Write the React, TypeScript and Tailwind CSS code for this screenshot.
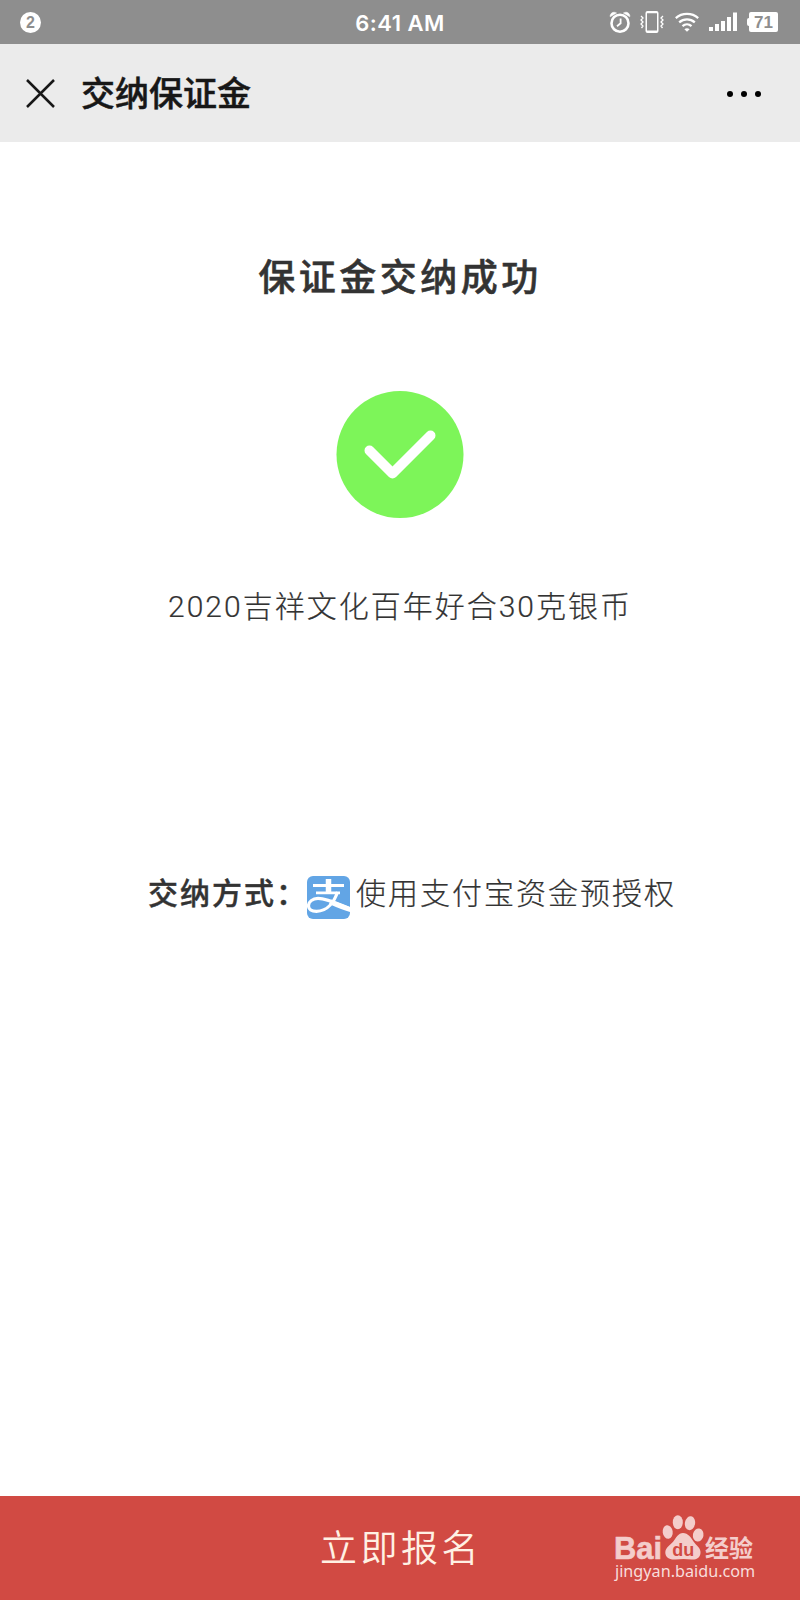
function AlarmIcon() {
  return (
    <svg width="22" height="24" viewBox="0 0 22 24" fill="none" stroke="white">
      <circle cx="11" cy="13.200" r="8.500" strokeWidth="2.600" />
      <path d="M11.600 8.500v4.800l-3.600 3" strokeWidth="1.800" />
      <path d="M1.200 6.800C.6 3.200 4.600 1 7.600 3ZM20.800 6.800C21.400 3.200 17.400 1 14.400 3Z" fill="white" strokeWidth="0.500" />
    </svg>
  );
}

function VibrateIcon() {
  return (
    <svg width="24" height="24" viewBox="0 0 24 24" fill="none" stroke="white">
      <path
        fill="white"
        fillRule="evenodd"
        stroke="none"
        d="M7.500 1h9a2 2 0 0 1 2 2v18a2 2 0 0 1-2 2h-9a2 2 0 0 1-2-2V3a2 2 0 0 1 2-2ZM7 3.200v17.400h10V3.200Z"
      />
      <path
        d="M1 6l2 2-2 2 2 2-2 2 2 2-1.500 2M23 6l-2 2 2 2-2 2 2 2-2 2 1.500 2"
        strokeWidth="1.300"
      />
    </svg>
  );
}

function WifiIcon() {
  return (
    <svg width="24" height="20" viewBox="0 0 24 20" fill="none" stroke="white" strokeWidth="2.300">
      <path d="M.8 6.100C7 .5 17 .5 23.200 6.100" />
      <path d="M4.200 10.300c4.500-4 11.100-4 15.600 0" />
      <path d="M7.500 14.200c2.600-2.400 6.400-2.400 9 0" />
      <path d="M9.400 17.200c1.500-1.400 3.700-1.400 5.200 0L12 19.800Z" fill="white" stroke="none" />
    </svg>
  );
}

function SignalIcon() {
  return (
    <svg width="28" height="20" viewBox="0 0 28 20" fill="white">
      <rect x="0" y="15" width="4" height="4" />
      <rect x="6" y="12" width="4" height="7" />
      <rect x="12" y="9" width="4" height="10" />
      <rect x="18" y="5" width="4" height="14" />
      <rect x="24" y="0.500" width="4" height="18.500" />
    </svg>
  );
}

function StatusBar() {
  return (
    <div className="flex h-11 shrink-0 items-center bg-[#8e8e8e] text-white">
      <div className="flex flex-1 pl-5">
        <span className="flex size-[21px] items-center justify-center rounded-full bg-white pt-px font-['Liberation_Sans',sans-serif] text-base leading-none font-bold text-[#8e8e8e]">
          2
        </span>
      </div>
      <span className="pt-0.5 pl-0.5 font-['Inter',sans-serif] text-[22px] leading-none font-semibold tracking-[0.500px]">
        6:41 AM
      </span>
      <div className="flex flex-1 items-center justify-end pr-[22px]">
        <AlarmIcon />
        <span className="ml-[9px]">
          <VibrateIcon />
        </span>
        <span className="ml-[11px]">
          <WifiIcon />
        </span>
        <span className="ml-[10px]">
          <SignalIcon />
        </span>
        <span className="ml-[10px] h-2 w-0.5 rounded-l-xs bg-white" />
        <span className="flex h-5 w-[29px] items-center justify-center rounded-xs bg-white font-['Liberation_Sans',sans-serif] text-[17px] leading-none font-bold text-[#8e8e8e]">
          71
        </span>
      </div>
    </div>
  );
}

function AlipayLogo() {
  return (
    <svg width="43" height="43" viewBox="0 0 43 43" className="overflow-hidden rounded-md">
      <rect width="43" height="43" fill="#62a5e5" />
      <g fill="none" stroke="white">
        <path d="M21.500 3v13" strokeWidth="5.500" />
        <path d="M6 9.500h31" strokeWidth="3" />
        <path d="M9 16.800h24" strokeWidth="2.700" />
        <path
          d="M30.500 16C27.500 25 21 35.300 9.500 35.300c-5 0-8-2-8-5.500C1.500 26 5.500 22.300 11 22.300c9 0 20 5.500 32 10.500"
          strokeWidth="3.200"
        />
        <path d="M23 25.800c6 2.700 13 5.700 21 8" strokeWidth="4.800" />
      </g>
    </svg>
  );
}

function BaiduMark() {
  return (
    <div className="h-[70px] w-[142px] text-[#f8dedc]">
      <svg width="142" height="46" viewBox="0 0 142 46" fill="#f4cdcb" className="overflow-visible">
        <text
          x="0"
          y="43.500"
          textLength="48"
          lengthAdjust="spacingAndGlyphs"
          stroke="#f4cdcb"
          strokeWidth="0.600"
          className="font-['Liberation_Sans',sans-serif] text-[32px] font-bold"
        >
          Bai
        </text>
        <ellipse cx="53.700" cy="17" rx="5" ry="6.900" transform="rotate(-8 53.700 17)" />
        <ellipse cx="63.800" cy="7.200" rx="5" ry="7" />
        <ellipse cx="76" cy="8.200" rx="5.100" ry="7" transform="rotate(10 76 8.200)" />
        <ellipse cx="84.200" cy="20" rx="5.300" ry="6.600" transform="rotate(10 84.200 20)" />
        <path d="M69 18c5 0 8 4.500 10.500 8.500 3 4.500 7.500 6.500 7 11.500-.5 5.500-5 7-9 6.500-5-.8-11-.8-16 0-5.500.7-10.200-2-10.200-7 0-5 5-7.500 8-11 3-4 5-8.500 9.700-8.500Z" />
        <text
          x="58.300"
          y="41"
          textLength="22"
          lengthAdjust="spacingAndGlyphs"
          className="fill-[#d14a43] font-['Liberation_Sans',sans-serif] text-[19px] font-bold"
        >
          du
        </text>
        <text
          x="91"
          y="41.500"
          textLength="48"
          lengthAdjust="spacingAndGlyphs"
          className="font-['Noto_Sans_CJK_SC',sans-serif] text-[24px] font-bold"
        >
          经验
        </text>
      </svg>
      <p className="pl-px font-['Noto_Sans',sans-serif] text-[16.200px] leading-5">jingyan.baidu.com</p>
    </div>
  );
}

export default function App() {
  return (
    <div className="flex h-[1600px] w-[800px] flex-col bg-white font-['Noto_Sans_CJK_SC',sans-serif] text-[#333333]">
      <StatusBar />
      <header className="flex h-[98px] shrink-0 items-center bg-[#ebebeb] pr-[39px] pl-[26px]">
        <svg width="29" height="29" viewBox="0 0 29 29" fill="none" stroke="#171717" strokeWidth="2.500">
          <path d="M1 1l27 27M28 1L1 28" />
        </svg>
        <h1 className="mb-0.5 ml-[26px] flex-1 text-[34px] leading-none font-medium text-[#171717] [-webkit-text-stroke:0.500px]">
          交纳保证金
        </h1>
        <div className="mt-px flex gap-2">
          <span className="size-1.5 rounded-full bg-black" />
          <span className="size-1.5 rounded-full bg-black" />
          <span className="size-1.5 rounded-full bg-black" />
        </div>
      </header>

      <main className="flex flex-1 flex-col items-center">
        <h2 className="mt-[107px] h-[52px] text-[37px] leading-[52px] font-medium tracking-[3.500px] [-webkit-text-stroke:0.500px]">
          保证金交纳成功
        </h2>
        <svg width="128" height="128" viewBox="0 0 128 128" className="mt-[89px]">
          <circle cx="64" cy="64.500" r="63.500" fill="#7df559" />
          <path
            d="M33.500 60.500l23 23 38-38"
            fill="none"
            stroke="white"
            strokeWidth="10"
            strokeLinecap="round"
            strokeLinejoin="round"
          />
        </svg>
        <p className="mt-[68px] h-[42px] font-['Roboto','Noto_Sans_CJK_SC',sans-serif] text-[30px] leading-[42px] font-light tracking-[2px] [-webkit-text-stroke:0.200px]">
          2020吉祥文化百年好合30克银币
        </p>
        <div className="mt-[240px] flex h-[46px] items-center pl-6 text-[30px] leading-[46px] tracking-[2px]">
          <span className="w-[159px] font-medium whitespace-nowrap [-webkit-text-stroke:0.400px]">交纳方式：</span>
          <span className="mt-3">
            <AlipayLogo />
          </span>
          <span className="ml-1.5 font-light [-webkit-text-stroke:0.200px]">使用支付宝资金预授权</span>
        </div>
      </main>

      <footer className="relative flex h-[104px] shrink-0 items-center justify-center bg-[#d14a43]">
        <button className="mb-1 pl-0.5 text-[37px] leading-none font-[350] tracking-[3.500px] text-[#fff1e4]">
          立即报名
        </button>
        <div className="absolute top-[19px] right-[44px]">
          <BaiduMark />
        </div>
      </footer>
    </div>
  );
}
